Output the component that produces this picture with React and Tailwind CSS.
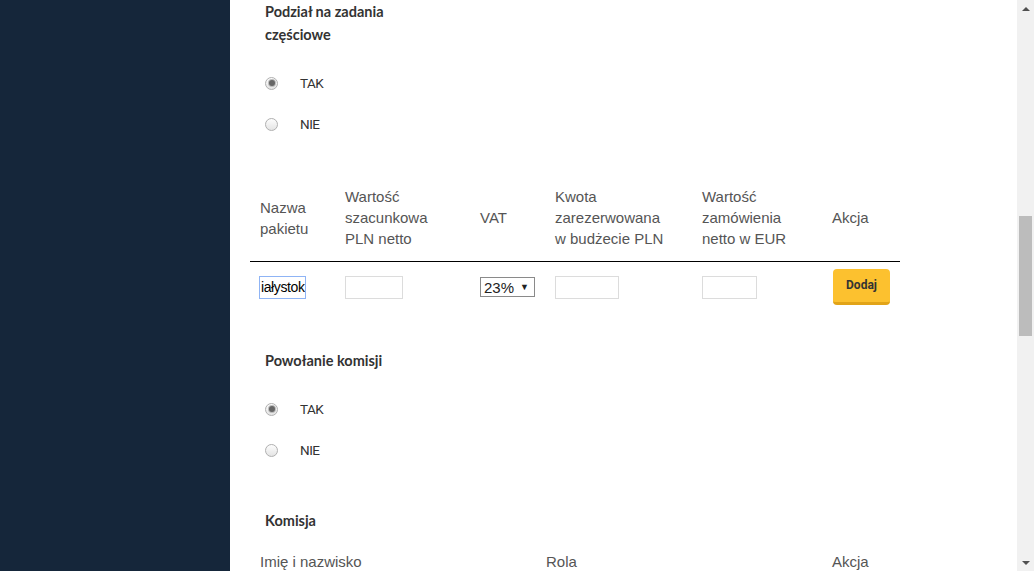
import React from "react";

function Radio({ checked, label }) {
  return (
    <div className="flex items-center h-[20px]">
      <div className="w-[13px] h-[13px] rounded-full border border-[#b0b0b0] bg-[linear-gradient(#fdfdfd,#e4e4e4)] flex items-center justify-center">
        {checked && <div className="w-[6px] h-[6px] rounded-full bg-[#666] shadow-[0_0_0_1px_#bbb]" />}
      </div>
      <span className="ml-[22px] text-[13.5px] text-[#333] font-['Roboto',sans-serif] tracking-[-0.5px]">{label}</span>
    </div>
  );
}

function Heading({ children, className = "" }) {
  return (
    <div className={"text-[14.5px] leading-[23px] font-bold text-[#333] font-['Lato',sans-serif] " + className}>
      {children}
    </div>
  );
}

function Input({ w }) {
  return <div className={"h-[23px] border border-[#dcdcdc] bg-white " + w} />;
}

export default function App() {
  return (
    <div className="flex h-[571px] w-[1034px] overflow-hidden bg-white">
      <div className="w-[230px] shrink-0 bg-[#15263a]" />
      <div className="flex-1 relative">
        <div className="pl-[35px]">
          <Heading className="w-[140px]">Podział na zadania częściowe</Heading>
          <div className="mt-[27px] flex flex-col gap-[21px]">
            <Radio checked label="TAK" />
            <Radio label="NIE" />
          </div>
        </div>

        <div className="ml-[20px] w-[650px] mt-[42px] font-['Liberation_Sans',sans-serif] text-[15px] text-[#555]">
          <div className="grid grid-cols-[85px_135px_75px_147px_130px_78px] border-b border-black">
            {[
              ["Nazwa", "pakietu"],
              ["Wartość", "szacunkowa", "PLN netto"],
              ["VAT"],
              ["Kwota", "zarezerwowana", "w budżecie PLN"],
              ["Wartość", "zamówienia", "netto w EUR"],
              ["Akcja"],
            ].map((lines, i) => (
              <div key={i} className="pl-[10px] pt-[10px] pb-[12px] h-[85px] flex flex-col justify-center leading-[21px]">
                {lines.map((l, j) => (
                  <div key={j} className="whitespace-nowrap">{l}</div>
                ))}
              </div>
            ))}
          </div>
          <div className="grid grid-cols-[85px_135px_75px_147px_130px_78px] h-[50px] items-center">
            <div className="pl-[9px]">
              <div className="w-[47px] h-[23px] border border-[#8fb4f5] overflow-hidden whitespace-nowrap text-[14px] leading-[21px] text-black pl-[1px] tracking-[-0.4px]">iałystok</div>
            </div>
            <div className="pl-[10px]"><Input w="w-[58px]" /></div>
            <div className="pl-[10px]">
              <div className="w-[55px] h-[20px] border border-[#8a8a8a] flex items-center pl-[3px] text-[15px] text-[#222] leading-none">
                <span>23%</span>
                <span className="ml-[6px] text-[9px]">▼</span>
              </div>
            </div>
            <div className="pl-[10px]"><Input w="w-[64px]" /></div>
            <div className="pl-[10px]"><Input w="w-[55px]" /></div>
            <div className="pl-[11px]">
              <div className="w-[57px] h-[36px] rounded-[4px] bg-[#fcc12f] border-b-[3px] border-[#e2a418] flex items-center justify-center text-[12px] font-bold text-[#333] font-['Roboto',sans-serif] pb-[1px]">Dodaj</div>
            </div>
          </div>
        </div>

        <div className="pl-[35px] mt-[37px]">
          <Heading>Powołanie komisji</Heading>
          <div className="mt-[27px] flex flex-col gap-[21px]">
            <Radio checked label="TAK" />
            <Radio label="NIE" />
          </div>
          <Heading className="mt-[49px]">Komisja</Heading>
        </div>

        <div className="ml-[20px] w-[650px] mt-[9px] font-['Liberation_Sans',sans-serif] text-[15px] text-[#555] grid grid-cols-[286px_286px_78px]">
          <div className="pl-[10px] pt-[10px] leading-[21px]">Imię i nazwisko</div>
          <div className="pl-[10px] pt-[10px] leading-[21px]">Rola</div>
          <div className="pl-[10px] pt-[10px] leading-[21px]">Akcja</div>
        </div>
      </div>
      <div className="w-[17px] shrink-0 bg-[#f1f1f1] flex flex-col items-center">
        <div className="h-[17px] flex items-center justify-center">
          <div className="w-0 h-0 border-l-[4px] border-r-[4px] border-b-[4px] border-l-transparent border-r-transparent border-b-[#505050]" />
        </div>
        <div className="mt-[199px] w-[13px] h-[120px] bg-[#bcbcbc]" />
        <div className="flex-1" />
        <div className="h-[17px] flex items-center justify-center">
          <div className="w-0 h-0 border-l-[4px] border-r-[4px] border-t-[4px] border-l-transparent border-r-transparent border-t-[#505050]" />
        </div>
      </div>
    </div>
  );
}
